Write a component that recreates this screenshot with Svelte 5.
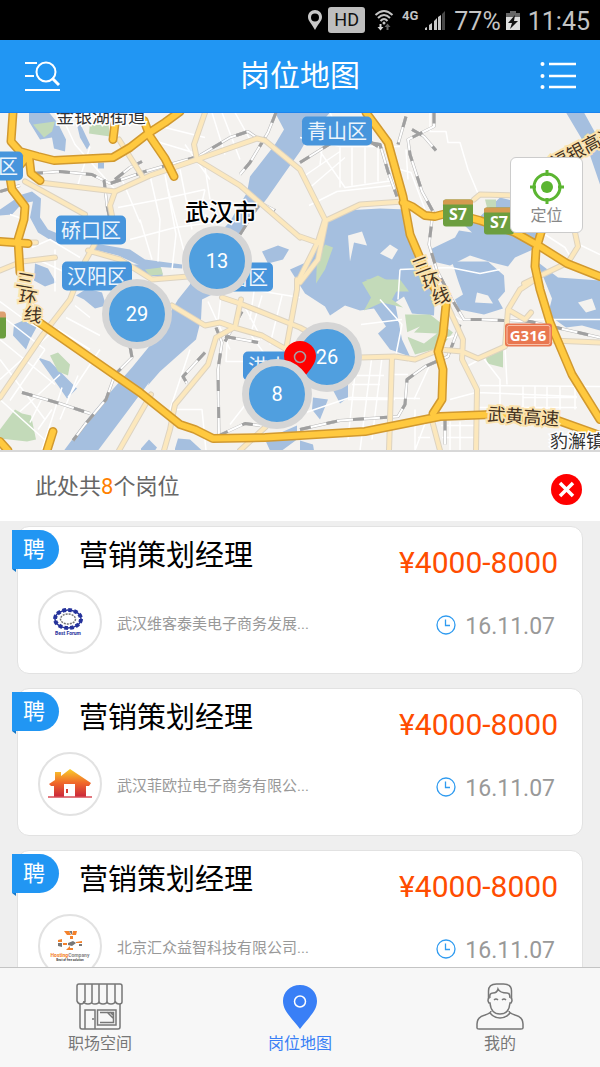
<script lang="ts">
	interface Cluster {
		count: number;
		x: number;
		y: number;
	}

	interface Job {
		title: string;
		salary: string;
		company: string;
		date: string;
		logo: 'forum' | 'house' | 'hosting';
	}

	// x is measured from the middle of the map, y from its top
	const clusters: Cluster[] = [
		{ count: 13, x: -83, y: 148 },
		{ count: 29, x: -163, y: 201 },
		{ count: 26, x: 27, y: 244 }
	];
	const nearest: Cluster = { count: 8, x: -23, y: 281 };

	const jobs: Job[] = [
		{ title: '营销策划经理', salary: '¥4000-8000', company: '武汉维客泰美电子商务发展...', date: '16.11.07', logo: 'forum' },
		{ title: '营销策划经理', salary: '¥4000-8000', company: '武汉菲欧拉电子商务有限公...', date: '16.11.07', logo: 'house' },
		{ title: '营销策划经理', salary: '¥4000-8000', company: '北京汇众益智科技有限公司...', date: '16.11.07', logo: 'hosting' }
	];

	const districts = [
		{ name: '青山区', x: 302, y: 117 },
		{ name: '硚口区', x: 56, y: 216 },
		{ name: '汉阳区', x: 62, y: 262 },
		{ name: '武昌区', x: 203, y: 263 },
		{ name: '洪山区', x: 243, y: 352 },
		{ name: '西湖区', x: -47, y: 152 }
	];

	const water = [
		'M275 113H330L308 138 300 152 283 176 267 199 240 233 222 290 202 300 201 320 196 340 160 372 140 395 98 451H64L88 419 110 393 132 368 150 346 160 330 178 300 190 285 205 250 230 222 247 193 250 177 275 145 284 130Z',
		'M29 113H49L58 124 66 140 65 152 54 149 52 138 40 140 29 122Z M74 113 82 128 90 145 87 150 80 138Z',
		'M0 210 22 195 32 192 41 199 40 218 48 230 60 235 56 244 38 233 30 218 33 202 22 204 12 215 0 216Z',
		'M95 244 130 250 145 260 182 265 182 269 140 266 118 256 94 250Z',
		'M133 265 160 265 163 277 145 276Z M262 252 278 246 289 250 283 260 268 264Z M98 163H104V169H98Z',
		'M35 264 48 269 56 283 45 287 34 281Z M76 296 87 289 102 293 106 306 95 309 84 300Z',
		'M14 325 28 319 38 325 30 340 26 350 13 336Z M38 358 50 362 66 378 77 389 67 399 58 386Z',
		'M141 449 149 440 157 448 155 451H141Z M175 449 178 439 190 440 202 451H175Z M265 440 297 426V440L282 451H270Z',
		'M325 225 345 211 380 209 407 210 411 237 418 263 435 292 434 316 412 314 404 297 395 303 402 340 410 357 390 350 378 334 386 327 374 309 360 311 345 306 330 316 325 307 305 294 290 270 308 262 317 248Z',
		'M442 205 455 214 480 217 500 198 528 205 540 234 533 250 515 258 508 267 492 263 470 256 450 266 433 262 430 250 455 238 459 231 472 233Z',
		'M452 262 488 262 504 276 505 292 498 300 503 309 484 315 459 310 455 300 463 295 458 281Z',
		'M537 262 558 278 600 281V331L582 326 566 328 548 315 552 299Z',
		'M566 113H584L600 142V185L588 150Z M313 398 328 400 320 420 312 410Z M330 385H348V398L340 404Z M300 441 313 445 314 451H300Z'
	];

	const parks = [
		'M33 125 55 122 52 132 44 138Z M90 124 108 121 110 137 89 134Z M145 270 161 268 163 275 150 276Z',
		'M50 356 58 353 70 365 68 376 58 372Z M0 430 15 410 22 414 31 416 36 440 27 442 0 439Z',
		'M362 283 378 276 399 287 392 300 403 308 382 303 364 311 371 298Z M405 315 430 315 453 333 441 348 415 355 408 339Z',
		'M317 260 325 245 333 248 325 270 316 284Z M366 280 400 280 409 292H380Z M485 200H496V208H487Z M486 358 503 350V368L487 364Z'
	];

	const islands = [
		'M348 236 362 232 367 246 354 243 350 262Z M380 254 390 245 398 250 392 260Z M402 335 420 327 414 333 437 334 424 344Z',
		'M120 423 149 383 144 400 130 414Z M475 303 477 293 488 296 493 304Z M578 303 592 299 596 310 586 313Z'
	];

	const streets = [
		'M60 113 75 145 115 190M90 147 78 185M185 145 210 180M140 220 152 260M150 176 160 220 158 262M165 175 176 235 172 270M180 170 192 230M118 208 160 200 205 190M130 240 175 228 220 222M120 175 140 223M205 190 198 220M140 137 200 155M153 125 205 138M212 113 225 155M222 113 240 160M235 113 250 140M168 190 190 275M205 168 210 200',
		'M32 248 50 240 80 258M55 250 55 292M42 262 70 275M10 215 25 220M0 302 27 322 60 340M0 315 45 350M0 340 55 385M0 360 45 420M0 380 55 330M10 401 45 350M20 412 60 375M30 423 42 399M38 430 52 410M58 330 90 350M66 318 100 336M75 306 90 318M62 388 42 450M78 376 60 420M100 350 68 398M0 400 50 445',
		'M208 302 230 350M221 296 217 330M228 328 226 362 250 362M230 340H260M247 330 270 362M242 302 262 340M262 296 252 330M282 296 270 345M175 410H202L206 451M265 380 230 425M220 285 300 298M255 285 250 320M190 350 170 410',
		'M300 138 340 147H400M318 149 345 188 400 180M340 148V188M352 148V186M365 148V184M378 149V182M302 178 340 152M310 188 345 158M322 149 320 165M330 113 344 145M406 150 408 180M430 113V132L446 132 448 143 460 143 468 170 478 194M309 206 337 192 400 185M400 170 411 173 425 210M387 179 397 184',
		'M400 270 450 268 480 274 500 270M400 270 398 300M380 300 402 325 396 355M361 325 402 320M352 385H380M353 376H384M348 400H395M356 365 348 440M372 356 360 451M382 358 372 440M390 375H408M300 415 350 398 420 399M414 400 430 365M415 410V451M408 362 430 352M428 416 415 451M441 426H475M450 400 476 393 577 397M476 408H577M480 386 600 387M523 387V410M535 387V410M547 387V410M560 387V410M523 398H577M575 387V410M465 368 483 358 500 380V410M505 347 507 385M441 340 456 336M480 360 502 350M442 438H474M450 422V451M460 422V451M418 438H430M545 235 565 248 575 265M575 243 600 255M442 307 460 320H600'
	];

	const railways = [
		'M0 192 20 186M32 174 60 172 92 175 110 184 145 172 198 157 230 138 248 132 258 139M276 113 268 133 250 163 240 175M104 180 107 206 112 230M115 180 130 168 142 162',
		'M300 163 340 138 380 145 388 172 397 197M434 113V127L422 133 408 140 410 155 422 192 433 212 429 245 437 271 452 300 464 320 480 320 530 322 600 338M406 117 398 145M378 147 363 138M412 130 424 137 436 151',
		'M130 347 132 358 115 375 106 400 85 425 73 441M22 393 60 404 90 414M216 328 222 343 218 370 219 436 245 424 260 426M205 353 183 377 187 384M242 312 225 342M300 430 340 421 398 417 405 405 407 380 425 367 448 357 460 325M445 420V445',
		'M240 235 260 203 275 211M225 337 258 343'
	];

	const minorRoads = [
		'M40 183 115 192 150 176 197 160 257 139 265 141 300 170 325 220 318 242 298 282',
		'M115 192 110 206 115 232M25 182 85 215M205 113 194 145 197 160 240 186 300 238M119 140 143 178',
		'M31 243H36M95 244 85 262 70 300 43 335 0 398M88 251 120 260 152 280 188 277M0 271 22 262 55 258',
		'M172 306 205 326 220 323 234 328 262 336 290 352M235 328 241 300M234 328 216 338 208 365 175 405 170 430 164 451M222 298 240 304 300 328 340 350M286 350 297 290 297 280M151 395 119 451M240 451 266 427',
		'M300 283 318 260 326 221 360 205 403 202M300 237 320 244M360 358 395 357 415 360 440 350 462 352 478 359 505 347 508 310 520 290 532 282M447 305 463 340 462 360 477 390 476 451M392 358 389 451M552 341 600 343M474 200 480 195 515 196M508 310 525 320 531 313M431 417 440 451M575 233 578 247 568 263 524 284'
	];

	const mainRoads = [
		'M13 113 11 142 20 152 38 157 54 161 113 158 130 148 148 134 165 123 180 112M144 121 150 137 165 159 174 177M115 124 113 140M29 157 31 174 40 181M27 157 10 178 12 190 25 207 24 220 18 240 20 273',
		'M0 242 28 244M35 320 140 393 180 425 195 430 213 439 265 438 300 436 365 432 440 417 492 415M53 432 47 451M0 442 8 451',
		'M366 113 388 143 403 197 410 235 430 282 446 305 443 335 438 352 443 370 442 400 433 414M403 203 412 207 425 216 435 217 450 213 480 221 515 233 540 247 567 264 600 277M541 233 536 250 535 267 540 290 550 323 572 375 600 420M488 415 558 421 600 436'
	];
</script>

{#snippet clusterButton(c: Cluster)}
	<button class="cluster" style="left: calc(50% + {c.x}px); top: {c.y}px">{c.count}</button>
{/snippet}

<div class="screen">
	<div class="status">
		<svg width="16" height="22" viewBox="0 0 16 22">
			<path d="M8 1C4 1 1 4 1 8c0 4 4 7 7 13 3-6 7-9 7-13 0-4-3-7-7-7Zm0 3.5a4 4 0 1 1 0 8 4 4 0 0 1 0-8Z" fill="#c8c8c8" fill-rule="evenodd" />
		</svg>
		<span class="hd">HD</span>
		<svg width="20" height="22" viewBox="0 0 20 22">
			<g fill="none" stroke="#c4c4c4" stroke-width="2">
				<path d="M1.5 6q8.500-8 17 0M4 9q6-6 12 0M6.500 12q3.500-4 7 0" />
			</g>
			<circle cx="10" cy="14" r="1.5" fill="#c4c4c4" />
			<path d="M5.500 15v3h-2l3 3.500 3-3.500h-2v-3Z" fill="#d8d8d8" />
			<path d="M12.500 21v-3h-2l3-3.500 3 3.500h-2v3Z" fill="#666" />
		</svg>
		<span class="network">4G</span>
		<svg class="signal" width="22" height="21" viewBox="0 0 22 21">
			<path d="M1 20v-2l2-1v3ZM5 20v-5l3-2v7ZM10 20v-9l3-3v12ZM14 20V7l3-2v15Z" fill="#c8c8c8" />
			<path d="M18 20V4l3-3v19Z" fill="#484848" />
		</svg>
		<span class="figure">77%</span>
		<svg width="14" height="21" viewBox="0 0 14 21">
			<path d="M4 1h6v2h4v5H0V3h4Z" fill="#666" />
			<path d="M0 7h14v13H0Z" fill="#ddd" />
			<path d="m9 5-7 8h4l-2 6 8-8H8Z" fill="#111" />
		</svg>
		<span class="figure time">11:45</span>
	</div>

	<header>
		<button aria-label="搜索">
			<svg width="36" height="32" viewBox="0 0 36 32" fill="none" stroke="#fff" stroke-width="2">
				<path d="M1 3h12M1 16h9M1 30h35" />
				<circle cx="22" cy="12" r="9.500" />
				<path d="m28 18 7 7" stroke-width="3" />
			</svg>
		</button>
		<h1>岗位地图</h1>
		<button aria-label="列表">
			<svg width="36" height="30" viewBox="0 0 36 30">
				<path d="M9 3h27M9 15h27M9 26h27" stroke="#fff" stroke-width="2.500" />
				<g fill="#fff"><circle cx="2.500" cy="3" r="2" /><circle cx="2.500" cy="15" r="2" /><circle cx="2.500" cy="26" r="2" /></g>
			</svg>
		</button>
	</header>

	<section class="map" aria-label="岗位地图">
		<svg class="tiles" viewBox="0 113 600 338" preserveAspectRatio="xMidYMid slice">
			<rect y="113" width="600" height="338" fill="#f4f2ef" />
			{#each water as d}<path {d} fill="#a5bfdf" />{/each}
			{#each parks as d}<path {d} fill="#c3dab9" />{/each}
			{#each islands as d}<path {d} fill="#f4f2ef" />{/each}
			<g fill="none" stroke-linejoin="round">
				{#each streets as d}<path {d} stroke="#fff" stroke-width="1.500" />{/each}
				{#each railways as d}
					<path {d} stroke="#b8b8b8" stroke-width="3" />
					<path {d} stroke="#fff" stroke-width="2" />
					<path {d} stroke="#a0a0a0" stroke-width="3" stroke-dasharray="11 16" />
				{/each}
				<g stroke-linecap="round">
					{#each minorRoads as d}<path {d} stroke="#ddd3c0" stroke-width="6" />{/each}
					{#each minorRoads as d}<path {d} stroke="#fce8bd" stroke-width="4" />{/each}
					{#each mainRoads as d}<path {d} stroke="#d1992f" stroke-width="9" />{/each}
					{#each mainRoads as d}<path {d} stroke="#ffc93f" stroke-width="6" />{/each}
				</g>
			</g>

			{#each districts as area}
				<rect x={area.x} y={area.y} width="70" height="29" rx="5" fill="#4795dc" />
				<text class="district" x={area.x + 35} y={area.y + 22}>{area.name}</text>
			{/each}

			<g class="place">
				<text x="56" y="123" font-size="18">金银湖街道</text>
				<text class="city" x="185" y="221" font-size="24">武汉市</text>
				<text x="550" y="448" font-size="18">豹澥镇</text>
			</g>
			<g class="road-name">
				<text x="487" y="421" transform="rotate(4 487 421)">武黄高速</text>
				<text x="555" y="171" transform="rotate(-28 555 171)">福银高速</text>
				<text x="15" y="286" transform="rotate(10 15 286)">三</text>
				<text x="18" y="303" transform="rotate(10 18 303)">环</text>
				<text x="23" y="320" transform="rotate(10 23 320)">线</text>
				<text x="415" y="275" transform="rotate(-20 415 275)">三</text>
				<text x="424" y="290" transform="rotate(-15 424 290)">环</text>
				<text x="434" y="305" transform="rotate(-15 434 305)">线</text>
			</g>

			<g class="shield">
				<rect x="443" y="200" width="30" height="27" rx="3" fill="#6c9e3f" />
				<path d="M443 205v-2q0-3 3-3h24q3 0 3 3v2Z" fill="#d59b50" />
				<text x="458" y="220">S7</text>
				<rect x="484" y="208" width="30" height="27" rx="3" fill="#6c9e3f" />
				<path d="M484 213v-2q0-3 3-3h24q3 0 3 3v2Z" fill="#d59b50" />
				<text x="499" y="228">S7</text>
				<rect x="505" y="324" width="47" height="23" rx="3" fill="#e97750" />
				<rect x="507" y="326" width="43" height="19" rx="2" fill="none" stroke="#f7c0a8" />
				<text class="national" x="528" y="341">G316</text>
				<rect x="-20" y="314" width="26" height="25" rx="3" fill="#6c9e3f" />
				<path d="M0 312h3q3 0 3 4v2H0Z" fill="#dda070" />
			</g>
		</svg>

		{#each clusters as c}
			{@render clusterButton(c)}
		{/each}
		<svg class="pin" width="32" height="42" viewBox="0 0 32 42">
			<path d="M16 0C7 0 0 7 0 15c0 9 8 15 16 27 8-12 16-18 16-27 0-8-7-15-16-15Z" fill="#f00" />
			<circle cx="16" cy="16" r="5.500" fill="none" stroke="#a5a0a5" stroke-width="1.500" />
		</svg>
		{@render clusterButton(nearest)}

		<button class="locate">
			<svg width="34" height="34" viewBox="0 0 34 34" fill="none" stroke="#5bb531" stroke-width="3">
				<circle cx="17" cy="17" r="13" />
				<path d="M17 0v6M17 28v6M0 17h6M28 17h6" />
				<circle cx="17" cy="17" r="6" fill="#5bb531" stroke="none" />
			</svg>
			定位
		</button>
	</section>

	<div class="summary">
		<p>此处共<em>8</em>个岗位</p>
		<button aria-label="关闭">
			<svg width="31" height="31" viewBox="0 0 31 31">
				<circle cx="15.500" cy="15.500" r="15.500" fill="#f00" />
				<path d="m9 9 13 13M22 9 9 22" stroke="#fff" stroke-width="3.500" />
			</svg>
		</button>
	</div>

	<main>
		{#each jobs as job}
			<article>
				<span class="badge">聘</span>
				<div class="info">
					<h2>{job.title}</h2>
					<div class="company">
						<span class="logo">
							{#if job.logo === 'forum'}
								<svg width="36" height="30" viewBox="0 0 36 30">
									<ellipse cx="16" cy="12" rx="13" ry="9" fill="none" stroke="#26339b" stroke-width="4" stroke-dasharray="3.600 2.200" />
									<ellipse cx="16" cy="12" rx="13" ry="9" fill="none" stroke="#26339b" stroke-width="1.500" />
									<ellipse cx="16" cy="12" rx="7.500" ry="5" fill="none" stroke="#777" stroke-width="1.500" stroke-dasharray="2 1" />
									<text x="16" y="28" font-size="5" fill="#26339b">Best Forum</text>
								</svg>
							{:else if job.logo === 'house'}
								<svg width="46" height="30" viewBox="0 0 46 30">
									<defs>
										<linearGradient id="roof" x2="0" y2="1">
											<stop offset="0" stop-color="#f9cf2b" />
											<stop offset=".5" stop-color="#f0682a" />
											<stop offset="1" stop-color="#c9263c" />
										</linearGradient>
									</defs>
									<path d="M8 9V3h6v4l9-7 21 14-2 3h-3v11H28V15H17v13H7V17H4l-2-2 6-4Z" fill="url(#roof)" />
									<path d="M19 20h2v4h-2Z" fill="#d63c31" />
									<path d="M1 28h44" stroke="#d84b55" stroke-width="1.500" />
								</svg>
							{:else}
								<svg width="42" height="32" viewBox="0 0 42 32">
									<path d="M15 1h5l2 4h-4ZM24 1h4l-1 4h-4ZM21 6h3v3h-3ZM9 10l4-1v3H9ZM14 13h4v2h-4ZM27 12l6-1v2h-6ZM21 16l-4 4h7v-2h-3Z" fill="#f4822c" />
									<path d="M20 1h3v4ZM9 13h4v4l-4-1ZM19 13l5-2 3 2-4 3-4-1ZM30 14h3v2h-3Z" fill="#777" />
									<text x="21" y="27" font-size="5"><tspan fill="#f47c1c">Hosting</tspan><tspan fill="#888"> Company</tspan></text>
									<text x="21" y="31" font-size="3" fill="#444">Best of free solution</text>
								</svg>
							{/if}
						</span>
						<span>{job.company}</span>
					</div>
				</div>
				<div class="terms">
					<strong>{job.salary}</strong>
					<div class="date">
						<svg width="20" height="24" viewBox="0 0 20 24" fill="none" stroke="#2f9bf0" stroke-width="1.300">
							<circle cx="10" cy="10" r="9" />
							<path d="M9.500 4.500v6H14" />
						</svg>
						<time datetime="2016-11-07">{job.date}</time>
					</div>
				</div>
			</article>
		{/each}
	</main>

	<nav>
		<a href="#space">
			<svg width="48" height="48" viewBox="0 0 48 48" fill="none" stroke="#777" stroke-width="1.500">
				<path d="M4 2h40q2 0 2 2v16q0 2-3 2t-4-3q0 3-4 3t-4-3q0 3-4 3t-4-3q0 3-4 3t-3-3q0 3-4 3t-4-3q0 3-3 3t-4-3V4q0-2 2-2ZM9 2v18M16 2v18M23 2v18M31 2v18M39 2v18" />
				<path d="M4 22v23q0 2 2 2h36q2 0 2-2V22M9 47V28h10v19M17 36v2" />
				<path d="M21.500 28H40v15H21.500ZM24 30.500h13.500v10H24M31 30l6 6M34 30l3 3" />
			</svg>
			职场空间
		</a>
		<a class="active" href="#map" aria-current="page">
			<svg width="48" height="48" viewBox="0 0 48 48">
				<path d="M24 3C14 3 7 10 7 19c0 10 8 16 17 28 9-12 17-18 17-28C41 10 34 3 24 3Z" fill="#397ff6" />
				<circle cx="24" cy="19.500" r="5.500" fill="none" stroke="#fff" stroke-width="1.500" />
			</svg>
			岗位地图
		</a>
		<a href="#mine">
			<svg width="48" height="48" viewBox="0 0 48 48" fill="none" stroke="#777" stroke-width="1.500">
				<path d="M12.500 17V9q0-7 8-7h7q8 0 8 7v8" />
				<path d="M14 16q-1-5 3-5 4 0 5-4 2 4 9 4 3 0 3 5" />
				<path d="M13 16q-2 2 0 5h1q1 11 10 11t10-11h1q2-3 0-5M18 18q2-2 4 0M26 18q2-2 4 0" />
				<path d="M15 29q0 2-6 4-8 2-8 9v4q0 1 2 1h42q2 0 2-1v-4q0-7-8-9-6-2-6-4M14 31q4 5 10 5t10-5" />
			</svg>
			我的
		</a>
	</nav>
</div>

<style>
	:global(body) {
		margin: 0;
		background: #efefef;
		font-family: Roboto, 'Noto Sans CJK SC', sans-serif;
	}

	.screen {
		display: flex;
		flex-direction: column;
		height: 100vh;
		overflow: hidden;
	}

	button {
		padding: 0;
		border: none;
		background: none;
		font-family: inherit;
		cursor: pointer;
	}

	svg {
		display: block;
		flex-shrink: 0;
	}

	h1,
	h2,
	p {
		margin: 0;
		font-weight: 400;
	}

	.status {
		display: flex;
		justify-content: flex-end;
		align-items: center;
		flex-shrink: 0;
		height: 40px;
		padding-right: 10px;
		background: #000;
		color: #c4c4c4;
	}

	.hd {
		margin: 0 9px 0 5px;
		padding: 0 6px;
		border-radius: 3px;
		background: #bebebe;
		color: #111;
		font-size: 18px;
		line-height: 26px;
	}

	.network {
		align-self: flex-start;
		margin: 8px 6px 0 8px;
		font-size: 13px;
		font-weight: 700;
		line-height: 16px;
	}

	.signal {
		margin-right: 8px;
	}

	.figure {
		margin-right: 5px;
		padding-top: 3px;
		font-size: 25px;
		line-height: 40px;
	}

	.time {
		margin: 0 0 0 8px;
	}

	header {
		display: flex;
		justify-content: space-between;
		align-items: center;
		flex-shrink: 0;
		height: 72px;
		padding: 0 24px;
		border-bottom: 1px solid #1b84ee;
		background: #2196f3;
	}

	h1 {
		color: #fff;
		font-size: 30px;
		line-height: 40px;
	}

	.map {
		position: relative;
		flex-shrink: 0;
		height: 337px;
		overflow: hidden;
		border-bottom: 2px solid #d8d8d8;
	}

	.tiles {
		width: 100%;
		height: 100%;
	}

	.district {
		fill: #edf5fc;
		font-size: 20px;
		text-anchor: middle;
	}

	.place text {
		fill: #333;
		stroke: #fff;
		stroke-width: 3px;
		paint-order: stroke;
	}

	.place .city {
		fill: #000;
		font-weight: 500;
	}

	.road-name {
		fill: #43321f;
		stroke: #fbe3ae;
		stroke-width: 4px;
		paint-order: stroke;
		font-size: 18px;
	}

	.shield {
		fill: #fff;
		font-family: 'Open Sans', sans-serif;
		font-size: 16px;
		font-weight: 700;
		text-anchor: middle;
	}

	.national {
		font-size: 15px;
	}

	.cluster {
		position: absolute;
		width: 70px;
		height: 70px;
		border: 7px solid #d5d5d5;
		border-radius: 50%;
		background: #509fdf;
		color: #fff;
		font-size: 20px;
		transform: translate(-50%, -50%);
	}

	.pin {
		position: absolute;
		top: 228px;
		left: calc(50% - 16px);
	}

	.locate {
		position: absolute;
		top: 44px;
		right: 17px;
		display: flex;
		flex-direction: column;
		align-items: center;
		gap: 2px;
		width: 73px;
		height: 76px;
		padding-top: 12px;
		border: 1px solid #ccc;
		border-radius: 6px;
		background: #fff;
		color: #888;
		font-size: 16px;
		line-height: 20px;
	}

	.summary {
		display: flex;
		justify-content: space-between;
		align-items: center;
		flex-shrink: 0;
		height: 69px;
		padding: 0 18px 0 35px;
		background: #fff;
	}

	.summary p {
		color: #666;
		font-size: 22px;
		line-height: 32px;
	}

	.summary button {
		padding-top: 6px;
	}

	em {
		color: #ff7f00;
		font-style: normal;
	}

	main {
		display: flex;
		flex: 1;
		flex-direction: column;
		gap: 14px;
		min-height: 0;
		overflow: hidden;
		padding: 5px 17px 0;
	}

	article {
		position: relative;
		display: flex;
		justify-content: space-between;
		flex-shrink: 0;
		box-sizing: border-box;
		height: 148px;
		padding: 0 24px 0 20px;
		border: 1px solid #e2e2e2;
		border-radius: 12px;
		background: #fff;
	}

	.badge {
		position: absolute;
		top: 3px;
		left: -6px;
		box-sizing: border-box;
		width: 47px;
		height: 39px;
		padding-left: 11px;
		border-radius: 0 20px 20px 0;
		background: #2196f3;
		color: #fff;
		font-size: 22px;
		line-height: 40px;
	}

	.badge::after {
		position: absolute;
		top: 100%;
		left: 0;
		border-top: 3px solid #1479cb;
		border-left: 4px solid transparent;
		content: '';
	}

	.info {
		display: flex;
		flex-direction: column;
		gap: 12px;
		padding-top: 8px;
	}

	h2 {
		padding-left: 41px;
		color: #000;
		font-size: 29px;
		line-height: 43px;
	}

	.company {
		display: flex;
		align-items: center;
		gap: 15px;
		color: #999;
		font-size: 15px;
		white-space: nowrap;
	}

	.logo {
		display: flex;
		justify-content: center;
		align-items: center;
		box-sizing: border-box;
		width: 64px;
		height: 64px;
		border: 2px solid #e2e2e2;
		border-radius: 50%;
	}

	.logo text {
		font-weight: 700;
		text-anchor: middle;
	}

	.terms {
		display: flex;
		flex-direction: column;
		align-items: flex-end;
		gap: 28px;
		padding-top: 16px;
	}

	strong {
		color: #ff4d00;
		font-size: 30px;
		font-weight: 400;
		line-height: 40px;
	}

	.date {
		display: flex;
		align-items: center;
		gap: 9px;
		padding-right: 3px;
		color: #999;
		font-size: 23px;
		line-height: 32px;
	}

	nav {
		display: flex;
		flex-shrink: 0;
		height: 99px;
		border-top: 1px solid #c4c4c4;
		background: #f7f7f7;
	}

	nav a {
		display: flex;
		flex: 1;
		flex-direction: column;
		align-items: center;
		gap: 2px;
		padding-top: 14px;
		color: #777;
		font-size: 16px;
		line-height: 24px;
		text-decoration: none;
	}

	nav .active {
		color: #397ff6;
	}
</style>
